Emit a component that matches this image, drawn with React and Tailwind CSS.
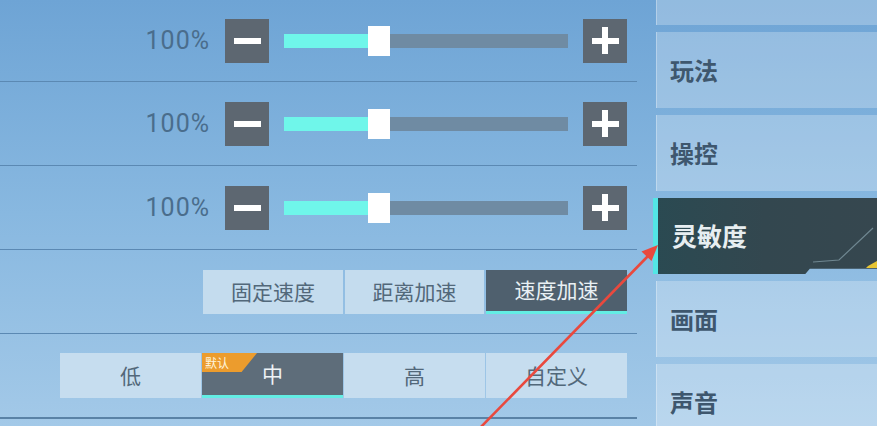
import React from "react";

const cjk = "font-['Noto_Sans_CJK_SC','Noto_Sans',sans-serif]";

function MinusIcon() {
  return <span className="block w-[27px] h-[6px] bg-white" />;
}

function PlusIcon() {
  return (
    <span className="relative block w-[27px] h-[27px]">
      <span className="absolute left-0 top-[10.5px] w-[27px] h-[6px] bg-white" />
      <span className="absolute top-0 left-[10.5px] w-[6px] h-[27px] bg-white" />
    </span>
  );
}

function SliderRow({ height }) {
  return (
    <div className={`flex items-center justify-end pr-[10px] border-b border-[#5b89b3] ${height}`}>
      <span className="mr-[15px] text-[25px] leading-none tracking-[1px] text-[#4a6d8c] font-['Roboto',sans-serif]">
        100%
      </span>
      <div className="w-[44px] h-[44px] bg-[#5d6771] flex items-center justify-center">
        <MinusIcon />
      </div>
      <div className="mx-[15px] w-[284px] h-[30px] flex items-center">
        <div className="w-[84px] h-[14px] bg-[#6ff6ea]" />
        <div className="w-[22px] h-[30px] bg-white" />
        <div className="flex-1 h-[14px] bg-[#6f8ba3]" />
      </div>
      <div className="w-[44px] h-[44px] bg-[#5d6771] flex items-center justify-center">
        <PlusIcon />
      </div>
    </div>
  );
}

function ModeButton({ label, active, width }) {
  return (
    <div
      className={`${width} h-[44px] flex items-center justify-center text-[21px] ${cjk} ${
        active
          ? "bg-[#4f606e] text-[#e9f0f4] border-b-[3px] border-[#63ede4]"
          : "bg-[#c4dcee] text-[#52687a]"
      }`}
    >
      {label}
    </div>
  );
}

function LevelButton({ label, active, tag }) {
  return (
    <div
      className={`relative w-[141px] h-[45px] flex items-center justify-center text-[21px] ${cjk} ${
        active
          ? "bg-[#5e6d7a] text-[#eef3f6] border-b-[3px] border-[#63ede4]"
          : "bg-[#c6ddef] text-[#52687a]"
      }`}
    >
      {tag && (
        <span
          className={`absolute left-0 top-0 w-[55px] h-[19px] bg-[#ec9c2d] pl-[3px] text-[12px] leading-[19px] text-[#fff4dc] ${cjk} [clip-path:polygon(0_0,100%_0,72%_100%,0_100%)]`}
        >
          {tag}
        </span>
      )}
      {label}
    </div>
  );
}

function Tab({ label, active }) {
  if (active) {
    return (
      <div className="relative shrink-0 -ml-[3px] h-[76px] flex items-center">
        <div className="absolute inset-0 bg-gradient-to-r from-[#2a4a52] via-[#33474f] to-[#36474f] [clip-path:polygon(0_0,100%_0,100%_93%,70%_93%,68%_100%,0_100%)]" />
        <div className="absolute left-0 top-0 w-[5px] h-full bg-[#53e6e6]" />
        <svg className="absolute inset-0" width="224" height="76" viewBox="0 0 224 76">
          <path d="M160 64 L186 62 L220 30" fill="none" stroke="#6f8791" strokeWidth="1.2" />
          <path d="M215 68 L224 63 L224 70 L213 70 Z" fill="#e7c534" />
        </svg>
        <span className={`relative pl-[19px] text-[25px] font-bold text-[#e7eef1] ${cjk}`}>{label}</span>
      </div>
    );
  }
  return (
    <div className="shrink-0 h-[76px] flex items-center bg-white/25 border-l border-white/30">
      <span className={`pl-[13px] text-[24px] font-bold text-[#3e576e] ${cjk}`}>{label}</span>
    </div>
  );
}

export default function App() {
  return (
    <div className="relative w-[877px] h-[426px] overflow-hidden flex bg-gradient-to-b from-[#6ea4d5] via-[#88b8e0] to-[#a3c9e8]">
      {/* settings list */}
      <div className="w-[656px] shrink-0">
        <div className="w-[637px] flex flex-col">
          <SliderRow height="h-[82px]" />
          <SliderRow height="h-[84px]" />
          <SliderRow height="h-[84px]" />
          <div className="h-[84px] flex items-center justify-end gap-[2px] pr-[10px] border-b border-[#5b89b3]">
            <ModeButton label="固定速度" width="w-[140px]" />
            <ModeButton label="距离加速" width="w-[139px]" />
            <ModeButton label="速度加速" width="w-[141px]" active />
          </div>
          <div className="h-[85px] flex items-center justify-end gap-[1px] pr-[10px] border-b-2 border-[#5a82a6]">
            <LevelButton label="低" />
            <LevelButton label="中" active tag="默认" />
            <LevelButton label="高" />
            <LevelButton label="自定义" />
          </div>
        </div>
      </div>

      {/* category tabs */}
      <div className="flex-1 flex flex-col gap-[7px] -mt-[51px]">
        <Tab label="" />
        <Tab label="玩法" />
        <Tab label="操控" />
        <Tab label="灵敏度" active />
        <Tab label="画面" />
        <Tab label="声音" />
      </div>

      {/* annotation arrow */}
      <svg className="absolute inset-0 pointer-events-none" width="877" height="426" viewBox="0 0 877 426">
        <line x1="478" y1="430" x2="649" y2="255" stroke="#e9493e" strokeWidth="2.6" strokeLinecap="round" />
        <polygon points="658,245 651.5,261 641.5,251.5" fill="#e9493e" />
      </svg>
    </div>
  );
}
